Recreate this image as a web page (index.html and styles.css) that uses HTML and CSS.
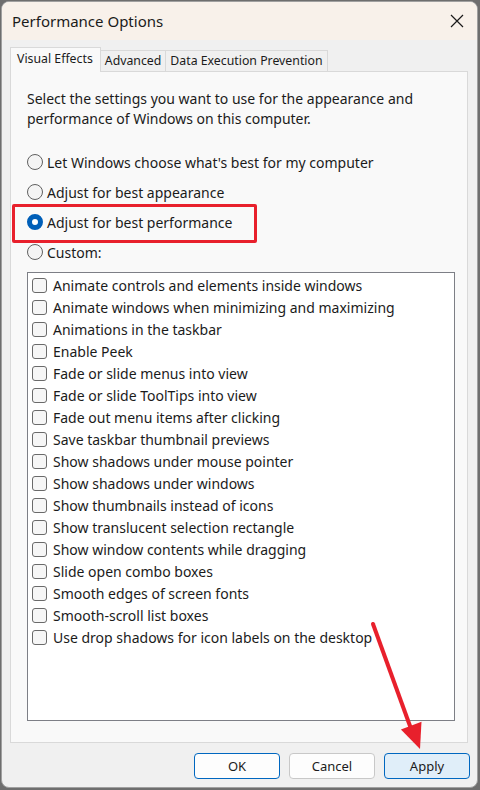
FILE: index.html
```html
<!DOCTYPE html>
<html>
<head>
  <meta charset="UTF-8">
  <title>Performance Options</title>
  <link rel="stylesheet" href="styles.css">
</head>
<body>
<div class="window">
  <div class="titlebar">
    <span class="title">Performance Options</span>
    <svg class="close" width="14" height="14" viewBox="0 0 14 14"><path d="M1 1 L13 13 M13 1 L1 13" stroke="#1a1a1a" stroke-width="1.2" fill="none"/></svg>
  </div>

  <div class="content">
    <div class="tabs">
      <div class="tab active">Visual Effects</div>
      <div class="tab">Advanced</div>
      <div class="tab">Data Execution Prevention</div>
    </div>

    <div class="panel">
      <p class="desc">Select the settings you want to use for the appearance and performance of Windows on this computer.</p>

      <div class="options">
        <div class="radio-row"><span class="radio"></span>Let Windows choose what's best for my computer</div>
        <div class="radio-row"><span class="radio"></span>Adjust for best appearance</div>
        <div class="radio-row highlighted"><span class="radio checked"></span>Adjust for best performance<span class="redbox"></span></div>
        <div class="radio-row"><span class="radio"></span>Custom:</div>
      </div>

      <div class="listbox">
        <div class="check-row"><span class="check"></span>Animate controls and elements inside windows</div>
        <div class="check-row"><span class="check"></span>Animate windows when minimizing and maximizing</div>
        <div class="check-row"><span class="check"></span>Animations in the taskbar</div>
        <div class="check-row"><span class="check"></span>Enable Peek</div>
        <div class="check-row"><span class="check"></span>Fade or slide menus into view</div>
        <div class="check-row"><span class="check"></span>Fade or slide ToolTips into view</div>
        <div class="check-row"><span class="check"></span>Fade out menu items after clicking</div>
        <div class="check-row"><span class="check"></span>Save taskbar thumbnail previews</div>
        <div class="check-row"><span class="check"></span>Show shadows under mouse pointer</div>
        <div class="check-row"><span class="check"></span>Show shadows under windows</div>
        <div class="check-row"><span class="check"></span>Show thumbnails instead of icons</div>
        <div class="check-row"><span class="check"></span>Show translucent selection rectangle</div>
        <div class="check-row"><span class="check"></span>Show window contents while dragging</div>
        <div class="check-row"><span class="check"></span>Slide open combo boxes</div>
        <div class="check-row"><span class="check"></span>Smooth edges of screen fonts</div>
        <div class="check-row"><span class="check"></span>Smooth-scroll list boxes</div>
        <div class="check-row"><span class="check"></span>Use drop shadows for icon labels on the desktop</div>
      </div>
    </div>

    <div class="footer">
      <button class="btn primary">OK</button>
      <button class="btn">Cancel</button>
      <button class="btn apply">Apply</button>
    </div>
  </div>
</div>

<!-- annotation arrow -->
<svg class="arrow" width="480" height="790" viewBox="0 0 480 790">
  <line x1="373" y1="624" x2="410" y2="726" stroke="#e8202c" stroke-width="4" stroke-linecap="round"/>
  <polygon points="400.9,729.5 421.5,721.7 420,749" fill="#e8202c"/>
</svg>
</body>
</html>
```

FILE: styles.css
```css
body {
  margin: 0;
  background-color: #6e6e6e;
  font-family: "Noto Sans", "Open Sans", sans-serif;
  color: #1b1b1b;
  width: 480px;
  height: 790px;
  overflow: hidden;
}

.window {
  margin: 1px 0 0 1px;
  width: 475px;
  height: 785px;
  border: 1px solid #a0a0a0;
  border-radius: 8px;
  background-color: #f0f0f0;
  overflow: hidden;
}

.titlebar {
  height: 38px;
  background-color: #f8f1ea;
  display: flex;
  align-items: center;
  justify-content: space-between;
  padding: 0 13px 0 10px;
}

.title {
  font-size: 15px;
}

.content {
  padding: 8px 9px 0 8px;
}

.tabs {
  display: flex;
  align-items: flex-end;
  height: 23px;
  font-size: 12.3px;
}

.tab {
  height: 20px;
  line-height: 20px;
  padding: 0 4px;
  border: 1px solid #d9d9d9;
  border-bottom: none;
  border-left: none;
  background-color: #f0f0f0;
}

.tab.active {
  height: 24px;
  line-height: 22px;
  margin-bottom: -1px;
  padding: 0 7px 0 6px;
  border-left: 1px solid #d9d9d9;
  background-color: #f9f9f9;
  position: relative;
}

.panel {
  height: 670px;
  border: 1px solid #d9d9d9;
  background-color: #f9f9f9;
  padding: 0 0 0 16px;
  box-sizing: content-box;
}

.desc {
  margin: 17px 20px 0 0;
  font-size: 14px;
  line-height: 20px;
}

.options {
  margin-top: 18px;
}

.radio-row {
  height: 30px;
  display: flex;
  align-items: center;
  font-size: 14px;
  position: relative;
}

.radio {
  width: 14px;
  height: 14px;
  border: 1px solid #606060;
  border-radius: 50%;
  background-color: #f4f4f4;
  margin-right: 4px;
  box-sizing: content-box;
}

.radio.checked {
  width: 6px;
  height: 6px;
  border: 5px solid #005fb8;
  background-color: #ffffff;
}

.redbox {
  position: absolute;
  left: -15px;
  top: -3px;
  width: 239px;
  height: 33px;
  border: 3px solid #e8202c;
  border-radius: 2px;
}

.listbox {
  margin-top: 5px;
  width: 422px;
  height: 446px;
  border: 1px solid #7d7f86;
  background-color: #ffffff;
  padding: 1px 0 0 4px;
  box-sizing: content-box;
}

.check-row {
  height: 22px;
  display: flex;
  align-items: center;
  font-size: 14px;
}

.check {
  width: 13px;
  height: 13px;
  border: 1px solid #6a6a6a;
  border-radius: 3px;
  background-color: #f6f6f6;
  margin-right: 6px;
}

.footer {
  display: flex;
  justify-content: flex-end;
  gap: 9px;
  padding: 10px 0 0 0;
  margin-right: -2px;
}

.btn {
  width: 86px;
  height: 26px;
  border: 1px solid #c8c8c8;
  border-radius: 4px;
  background-color: #fdfdfd;
  font-family: "Noto Sans", "Open Sans", sans-serif;
  font-size: 13px;
  color: #1b1b1b;
  padding: 0;
}

.btn.primary {
  border-color: #0067c0;
}

.btn.apply {
  border-color: #0067c0;
  background-color: #e0eef9;
}

.arrow {
  position: absolute;
  left: 0;
  top: 0;
}
```
